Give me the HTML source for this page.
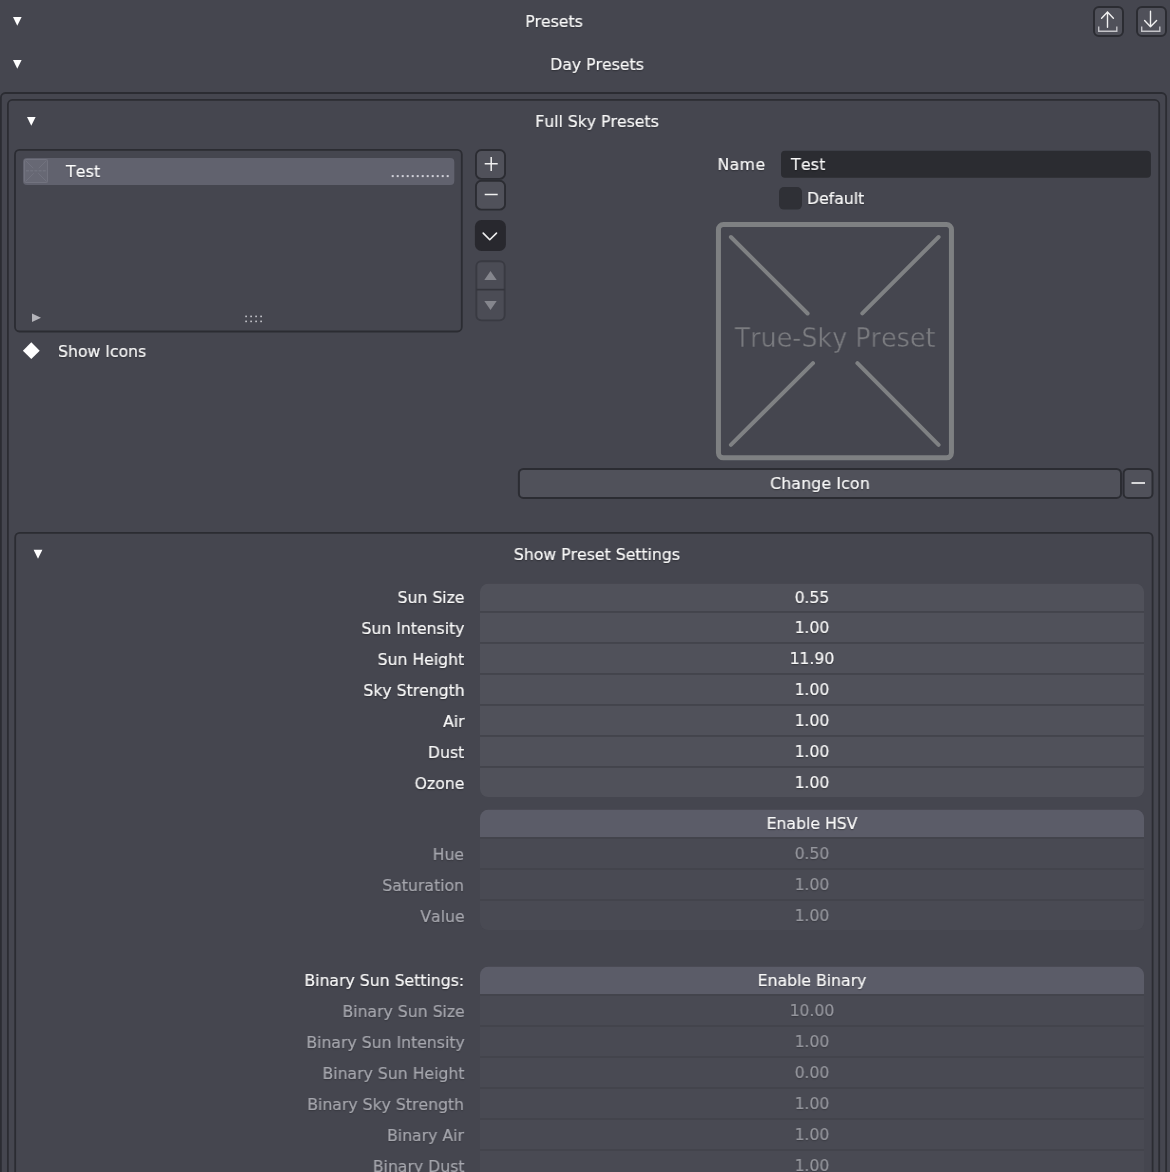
<!DOCTYPE html>
<html lang="en"><head><meta charset="utf-8"><title>Presets</title>
<style>
html,body{margin:0;padding:0;background:#45464f;}
body{width:1170px;height:1172px;overflow:hidden;position:relative;font-family:"DejaVu Sans","Liberation Sans",sans-serif;}
#root{position:absolute;left:0;top:0;width:1170px;height:1172px;overflow:hidden;background:#45464f;}
svg{position:absolute;left:0;top:0;}
.t{position:absolute;height:20px;line-height:20px;font-size:16.5px;color:#f8f8f8;white-space:nowrap;text-shadow:0 1px 1.5px rgba(0,0,0,0.38);transform:scaleX(0.95);word-spacing:0px;will-change:transform;font-kerning:none;-webkit-text-stroke:0.22px;}
.d{text-shadow:0 1px 1.5px rgba(0,0,0,0.25);}
.pv{position:absolute;text-align:center;font-family:"DejaVu Sans","Liberation Sans",sans-serif;font-weight:400;font-size:27px;line-height:40px;height:40px;color:#7b7c80;white-space:nowrap;will-change:transform;transform:scaleX(0.94);-webkit-text-stroke:0.4px #45464f;font-kerning:none;}
</style></head><body><div id="root">
<svg width="1170" height="1172" viewBox="0 0 1170 1172">
<path d="M13 17H21.6L17.3 25.8Z" fill="#ffffff" />
<path d="M13 60H21.6L17.3 68.8Z" fill="#ffffff" />
<rect x="1094" y="7" width="29" height="28.9" rx="5" fill="#50515a" stroke="#2b2c32" stroke-width="2" />
<rect x="1137" y="7" width="29" height="28.9" rx="5" fill="#50515a" stroke="#2b2c32" stroke-width="2" />
<path d="M1107.5 27.3V12M1101.6 18.2L1107.5 12L1113.4 18.2" fill="none" stroke="#f0f0f0" stroke-width="1.4" stroke-linecap="round" stroke-linejoin="round"/>
<path d="M1098.7 26.5V31.3H1116.8V26.5" fill="none" stroke="#c4c4c8" stroke-width="1.4" />
<path d="M1150.5 11.3V26.8M1144.6 20.6L1150.5 26.8L1156.6 20.6" fill="none" stroke="#f0f0f0" stroke-width="1.4" stroke-linecap="round" stroke-linejoin="round"/>
<path d="M1141.7 26.5V31.3H1159.8V26.5" fill="none" stroke="#c4c4c8" stroke-width="1.4" />
<rect x="0.9" y="93.0" width="1165.25" height="1200" rx="4.5" fill="none" stroke="#2b2c32" stroke-width="1.8" />
<rect x="7.9" y="99.95" width="1151.3" height="1200" rx="4.5" fill="none" stroke="#2b2c32" stroke-width="1.8" />
<rect x="15.2" y="532.9" width="1137.4" height="1200" rx="4.5" fill="none" stroke="#2b2c32" stroke-width="1.8" />
<path d="M27 117H35.6L31.3 125.8Z" fill="#ffffff" />
<rect x="15.0" y="149.9" width="446.8" height="181.6" rx="4.5" fill="none" stroke="#2b2c32" stroke-width="1.8" />
<rect x="23" y="158" width="431.3" height="27" rx="4" fill="#61626e" />
<rect x="24" y="159" width="24" height="24" rx="1" fill="#676874" />
<rect x="24.5" y="159.5" width="23" height="23" rx="1" fill="none" stroke="#72737f" stroke-width="1" />
<path d="M25.5 160.5L33.2 168.2M46.5 160.5L38.8 168.2M25.5 181.5L33.8 173.2M46.5 181.5L38.2 173.2" fill="none" stroke="#737480" stroke-width="0.9" />
<path d="M26 170.8H46" fill="none" stroke="#71727e" stroke-width="1.6" stroke-dasharray="3 1.2"/>
<rect x="391.7" y="175.1" width="2" height="2" fill="#d2d2da" />
<rect x="396.7" y="175.1" width="2" height="2" fill="#d2d2da" />
<rect x="401.7" y="175.1" width="2" height="2" fill="#d2d2da" />
<rect x="406.7" y="175.1" width="2" height="2" fill="#d2d2da" />
<rect x="411.7" y="175.1" width="2" height="2" fill="#d2d2da" />
<rect x="416.7" y="175.1" width="2" height="2" fill="#d2d2da" />
<rect x="421.7" y="175.1" width="2" height="2" fill="#d2d2da" />
<rect x="426.7" y="175.1" width="2" height="2" fill="#d2d2da" />
<rect x="431.7" y="175.1" width="2" height="2" fill="#d2d2da" />
<rect x="436.7" y="175.1" width="2" height="2" fill="#d2d2da" />
<rect x="441.7" y="175.1" width="2" height="2" fill="#d2d2da" />
<rect x="446.7" y="175.1" width="2" height="2" fill="#d2d2da" />
<path d="M32 313.5L41 317.7L32 321.9Z" fill="#b4b4ba" />
<rect x="245.3" y="315.6" width="1.6" height="1.6" fill="#c9c9cf" />
<rect x="245.3" y="320.6" width="1.6" height="1.6" fill="#c9c9cf" />
<rect x="250.3" y="315.6" width="1.6" height="1.6" fill="#c9c9cf" />
<rect x="250.3" y="320.6" width="1.6" height="1.6" fill="#c9c9cf" />
<rect x="255.3" y="315.6" width="1.6" height="1.6" fill="#c9c9cf" />
<rect x="255.3" y="320.6" width="1.6" height="1.6" fill="#c9c9cf" />
<rect x="260.3" y="315.6" width="1.6" height="1.6" fill="#c9c9cf" />
<rect x="260.3" y="320.6" width="1.6" height="1.6" fill="#c9c9cf" />
<rect x="475.95" y="150.0" width="29.1" height="28.9" rx="5.5" fill="#50515a" stroke="#2b2c32" stroke-width="1.9" />
<rect x="475.95" y="180.75" width="29.1" height="28.9" rx="5.5" fill="#50515a" stroke="#2b2c32" stroke-width="1.9" />
<path d="M484.7 163.8H497.7M491.2 157V171" fill="none" stroke="#f0f0f0" stroke-width="1.5" />
<path d="M484.7 194.5H497.7" fill="none" stroke="#f0f0f0" stroke-width="1.5" />
<rect x="474.9" y="220.0" width="31.0" height="31.0" rx="6.5" fill="#28282e" />
<path d="M483.2 233.1L489.75 239.7L496.5 233.1" fill="none" stroke="#f0f0f0" stroke-width="1.6" stroke-linecap="round" stroke-linejoin="round"/>
<rect x="476.35" y="261.25" width="28.3" height="59.1" rx="5" fill="#4b4c55" stroke="#393a42" stroke-width="1.9" />
<path d="M476.4 289.6H504.6" fill="none" stroke="#34353c" stroke-width="1.7" />
<path d="M490.5 271L496.7 280H484.3Z" fill="#85868d" />
<path d="M484.3 301.1H496.7L490.5 310Z" fill="#85868d" />
<path d="M31.3 342.3L39.7 350.7L31.3 359.1L22.9 350.7Z" fill="#ffffff" />
<rect x="781" y="150.85" width="369.9" height="26.9" rx="4" fill="#2b2c31" />
<rect x="779" y="187" width="23" height="22.6" rx="5" fill="#2f3036" />
<rect x="718.45" y="224.55" width="233.0" height="233.3" rx="5" fill="none" stroke="#7e8082" stroke-width="5" />
<path d="M730.9 237.0L807.6 313.5M938.6 237.0L862.3 313.3M730.9 444.8L813 363.2M938.6 444.8L857.4 363.2" fill="none" stroke="#7f8183" stroke-width="4" stroke-linecap="round"/>
<rect x="518.9" y="468.95" width="602.1" height="28.95" rx="4.5" fill="#50515a" stroke="#2b2c32" stroke-width="2" />
<rect x="1123.6" y="468.95" width="28.9" height="28.95" rx="4.5" fill="#50515a" stroke="#2b2c32" stroke-width="2" />
<path d="M1131.5 483H1145" fill="none" stroke="#f0f0f0" stroke-width="1.7" />
<path d="M33.6 549.8H42.4L38.0 558.8Z" fill="#ffffff" />
<clipPath id="c584"><rect x="480" y="583.8" width="664" height="213.2" rx="8"/></clipPath>
<g clip-path="url(#c584)">
<rect x="480" y="583" width="664" height="215.0" fill="#43444c" />
<rect x="480" y="583" width="664" height="28.0" fill="#50515a" />
<rect x="480" y="612.9" width="664" height="29.1" fill="#50515a" />
<rect x="480" y="643.9" width="664" height="29.1" fill="#50515a" />
<rect x="480" y="674.9" width="664" height="29.1" fill="#50515a" />
<rect x="480" y="705.9" width="664" height="29.1" fill="#50515a" />
<rect x="480" y="736.9" width="664" height="29.1" fill="#50515a" />
<rect x="480" y="767.9" width="664" height="30.1" fill="#50515a" />
</g>
<clipPath id="c810"><rect x="480" y="809.8" width="664" height="120.2" rx="8"/></clipPath>
<g clip-path="url(#c810)">
<rect x="480" y="809" width="664" height="122.0" fill="#43444c" />
<rect x="480" y="809" width="664" height="28.0" fill="#5b5c68" />
<rect x="480" y="838.9" width="664" height="29.1" fill="#494a53" />
<rect x="480" y="869.9" width="664" height="29.1" fill="#494a53" />
<rect x="480" y="900.9" width="664" height="30.1" fill="#494a53" />
</g>
<clipPath id="c967"><rect x="480" y="966.8" width="664" height="244.2" rx="8"/></clipPath>
<g clip-path="url(#c967)">
<rect x="480" y="966" width="664" height="246.0" fill="#43444c" />
<rect x="480" y="966" width="664" height="28.0" fill="#5b5c68" />
<rect x="480" y="995.9" width="664" height="29.1" fill="#494a53" />
<rect x="480" y="1026.9" width="664" height="29.1" fill="#494a53" />
<rect x="480" y="1057.9" width="664" height="29.1" fill="#494a53" />
<rect x="480" y="1088.9" width="664" height="29.1" fill="#494a53" />
<rect x="480" y="1119.9" width="664" height="29.1" fill="#494a53" />
<rect x="480" y="1150.9" width="664" height="29.1" fill="#494a53" />
<rect x="480" y="1181.9" width="664" height="30.1" fill="#494a53" />
</g>
</svg>
<div class="t " style="top:12.0px;left:253.70000000000005px;width:600px;text-align:center;">Presets</div>
<div class="t " style="top:55.0px;left:296.70000000000005px;width:600px;text-align:center;">Day Presets</div>
<div class="t " style="top:112.0px;left:297.29999999999995px;width:600px;text-align:center;">Full Sky Presets</div>
<div class="t " style="top:162.0px;left:66.4px;transform-origin:0 50%;color:#ffffff;letter-spacing:0.25px;">Test</div>
<div class="t " style="top:341.6px;left:57.8px;transform-origin:0 50%;">Show Icons</div>
<div class="t " style="top:155.0px;right:404.70000000000005px;text-align:right;transform-origin:100% 50%;letter-spacing:0.45px;">Name</div>
<div class="t " style="top:155.0px;left:791.3px;transform-origin:0 50%;letter-spacing:0.3px;">Test</div>
<div class="t " style="top:189.0px;left:806.6px;transform-origin:0 50%;">Default</div>
<div class="pv" style="left:635.4px;width:400px;top:318px;">True-Sky Preset</div>
<div class="t " style="top:474.0px;left:519.6px;width:600px;text-align:center;letter-spacing:0.2px;">Change Icon</div>
<div class="t " style="top:545.0px;left:297.29999999999995px;width:600px;text-align:center;">Show Preset Settings</div>
<div class="t " style="top:588.0px;right:705.7px;text-align:right;transform-origin:100% 50%;">Sun Size</div>
<div class="t " style="top:588.0px;left:512px;width:600px;text-align:center;">0.55</div>
<div class="t " style="top:619.0px;right:705.7px;text-align:right;transform-origin:100% 50%;">Sun Intensity</div>
<div class="t " style="top:618.0px;left:512px;width:600px;text-align:center;">1.00</div>
<div class="t " style="top:650.0px;right:705.7px;text-align:right;transform-origin:100% 50%;">Sun Height</div>
<div class="t " style="top:649.0px;left:512px;width:600px;text-align:center;">11.90</div>
<div class="t " style="top:681.0px;right:705.7px;text-align:right;transform-origin:100% 50%;">Sky Strength</div>
<div class="t " style="top:680.0px;left:512px;width:600px;text-align:center;">1.00</div>
<div class="t " style="top:712.0px;right:705.7px;text-align:right;transform-origin:100% 50%;">Air</div>
<div class="t " style="top:711.0px;left:512px;width:600px;text-align:center;">1.00</div>
<div class="t " style="top:743.0px;right:705.7px;text-align:right;transform-origin:100% 50%;">Dust</div>
<div class="t " style="top:742.0px;left:512px;width:600px;text-align:center;">1.00</div>
<div class="t " style="top:774.0px;right:705.7px;text-align:right;transform-origin:100% 50%;">Ozone</div>
<div class="t " style="top:773.0px;left:512px;width:600px;text-align:center;">1.00</div>
<div class="t " style="top:814.0px;left:512px;width:600px;text-align:center;">Enable HSV</div>
<div class="t d" style="top:845.0px;right:705.7px;text-align:right;transform-origin:100% 50%;color:#a5a6ad;">Hue</div>
<div class="t d" style="top:844.0px;left:512px;width:600px;text-align:center;color:#96979e;">0.50</div>
<div class="t d" style="top:876.0px;right:705.7px;text-align:right;transform-origin:100% 50%;color:#a5a6ad;">Saturation</div>
<div class="t d" style="top:875.0px;left:512px;width:600px;text-align:center;color:#96979e;">1.00</div>
<div class="t d" style="top:907.0px;right:705.7px;text-align:right;transform-origin:100% 50%;color:#a5a6ad;">Value</div>
<div class="t d" style="top:906.0px;left:512px;width:600px;text-align:center;color:#96979e;">1.00</div>
<div class="t " style="top:971.0px;right:705.7px;text-align:right;transform-origin:100% 50%;">Binary Sun Settings:</div>
<div class="t " style="top:971.0px;left:512px;width:600px;text-align:center;">Enable Binary</div>
<div class="t d" style="top:1002.0px;right:705.7px;text-align:right;transform-origin:100% 50%;color:#a5a6ad;">Binary Sun Size</div>
<div class="t d" style="top:1001.0px;left:512px;width:600px;text-align:center;color:#96979e;">10.00</div>
<div class="t d" style="top:1033.0px;right:705.7px;text-align:right;transform-origin:100% 50%;color:#a5a6ad;">Binary Sun Intensity</div>
<div class="t d" style="top:1032.0px;left:512px;width:600px;text-align:center;color:#96979e;">1.00</div>
<div class="t d" style="top:1064.0px;right:705.7px;text-align:right;transform-origin:100% 50%;color:#a5a6ad;">Binary Sun Height</div>
<div class="t d" style="top:1063.0px;left:512px;width:600px;text-align:center;color:#96979e;">0.00</div>
<div class="t d" style="top:1095.0px;right:705.7px;text-align:right;transform-origin:100% 50%;color:#a5a6ad;">Binary Sky Strength</div>
<div class="t d" style="top:1094.0px;left:512px;width:600px;text-align:center;color:#96979e;">1.00</div>
<div class="t d" style="top:1126.0px;right:705.7px;text-align:right;transform-origin:100% 50%;color:#a5a6ad;">Binary Air</div>
<div class="t d" style="top:1125.0px;left:512px;width:600px;text-align:center;color:#96979e;">1.00</div>
<div class="t d" style="top:1157.0px;right:705.7px;text-align:right;transform-origin:100% 50%;color:#a5a6ad;">Binary Dust</div>
<div class="t d" style="top:1156.0px;left:512px;width:600px;text-align:center;color:#96979e;">1.00</div>
<div class="t d" style="top:1188.0px;right:705.7px;text-align:right;transform-origin:100% 50%;color:#a5a6ad;">Binary Ozone</div>
<div class="t d" style="top:1187.0px;left:512px;width:600px;text-align:center;color:#96979e;">1.00</div>
</div></body></html>
